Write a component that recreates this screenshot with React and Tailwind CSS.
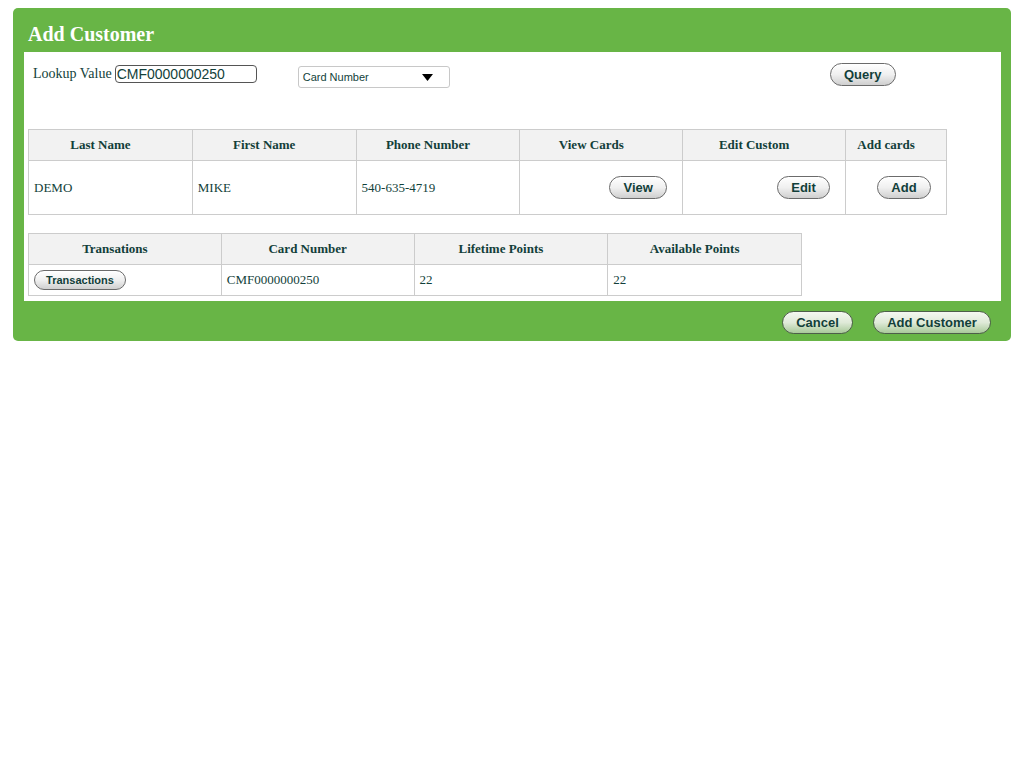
export default function App() {
    const serif = { fontFamily: '"Liberation Serif", "Times New Roman", serif' };
    const sans = { fontFamily: '"Liberation Sans", Arial, sans-serif' };

    const btn =
        'rounded-full border border-[#6b6b6b] bg-gradient-to-b from-[#ffffff] via-[#f0f0f0] to-[#cfcfcf] text-[13px] font-bold text-[#123f3a] leading-none shadow-[inset_0_1px_0_#fff]';
    const greenBtn =
        'rounded-full border border-[#4d5e4a] bg-gradient-to-b from-[#f4f8f1] via-[#dfead8] to-[#a9c99a] text-[13px] font-bold text-[#123f3a] leading-none';

    const th = 'border border-[#cccccc] bg-[#f2f2f2] text-[13px] font-bold text-[#123f3a] text-center py-0 pl-0 pr-[20px]';
    const td = 'border border-[#cccccc] text-[13px] text-[#123f3a] text-left px-[5px] py-0 font-normal';

    return (
        <div className="min-h-[768px] bg-white pt-[8px] pl-[13px]" style={sans}>
            <div className="w-[998px] rounded-[5px] bg-[#68b546]">
                {/* title */}
                <div className="h-[44px] pl-[15px] pt-[13px]">
                    <h1 className="text-[20px] font-bold leading-[26px] text-white" style={serif}>
                        Add Customer
                    </h1>
                </div>

                {/* body */}
                <div className="ml-[11px] mr-[10px] h-[249px] bg-white pl-[4px] pt-[11px]">
                    <div className="flex h-[26px] items-start">
                        <div className="mt-[2px] ml-[5px] flex items-center">
                            <span className="text-[14px] leading-[18px] text-[#123f3a]" style={serif}>
                                Lookup Value
                            </span>
                            <div className="ml-[3px] flex h-[18px] w-[142px] items-center rounded-[4px] border border-[#555] px-[1px] text-[14px] text-[#123f3a]">
                                CMF0000000250
                            </div>
                        </div>
                        <div className="mt-[3px] ml-[41px] flex h-[22px] w-[152px] items-center justify-between rounded-[3px] border border-[#c8c8c8] pl-[4px] pr-[16px] text-[11px] text-[#123f3a]">
                            <span>Card Number</span>
                            <svg width="11" height="7" viewBox="0 0 11 7">
                                <path d="M0 0 L11 0 L5.5 7 Z" fill="#000" />
                            </svg>
                        </div>
                        <button className={`${btn} ml-[380px] h-[23px] w-[66px]`}>Query</button>
                    </div>

                    {/* customer table */}
                    <table className="mt-[40px] w-[919px] border-collapse" style={serif}>
                        <thead>
                            <tr className="h-[31px]">
                                <th className={`${th} w-[164px]`}>Last Name</th>
                                <th className={`${th} w-[164px]`}>First Name</th>
                                <th className={`${th} w-[164px]`}>Phone Number</th>
                                <th className={`${th} w-[163px]`}>View Cards</th>
                                <th className={`${th} w-[163px]`}>Edit Custom</th>
                                <th className={`${th} w-[101px]`}>Add cards</th>
                            </tr>
                        </thead>
                        <tbody>
                            <tr className="h-[54px]">
                                <td className={td}>DEMO</td>
                                <td className={td}>MIKE</td>
                                <td className={td}>540-635-4719</td>
                                <td className={td}>
                                    <div className="flex justify-end pr-[10px]">
                                        <button className={`${btn} h-[23px] w-[58px]`} style={sans}>View</button>
                                    </div>
                                </td>
                                <td className={td}>
                                    <div className="flex justify-end pr-[10px]">
                                        <button className={`${btn} h-[23px] w-[53px]`} style={sans}>Edit</button>
                                    </div>
                                </td>
                                <td className={td}>
                                    <div className="flex justify-end pr-[10px]">
                                        <button className={`${btn} h-[23px] w-[54px]`} style={sans}>Add</button>
                                    </div>
                                </td>
                            </tr>
                        </tbody>
                    </table>

                    {/* card table */}
                    <table className="mt-[18px] w-[774px] border-collapse" style={serif}>
                        <thead>
                            <tr className="h-[31px]">
                                <th className={`${th} w-[193px]`}>Transations</th>
                                <th className={`${th} w-[193px]`}>Card Number</th>
                                <th className={`${th} w-[194px]`}>Lifetime Points</th>
                                <th className={`${th} w-[194px]`}>Available Points</th>
                            </tr>
                        </thead>
                        <tbody>
                            <tr className="h-[31px]">
                                <td className={td}>
                                    <button className={`${btn} h-[20px] w-[92px]`} style={{ ...sans, fontSize: 11 }}>
                                        Transactions
                                    </button>
                                </td>
                                <td className={td}>CMF0000000250</td>
                                <td className={td}>22</td>
                                <td className={td}>22</td>
                            </tr>
                        </tbody>
                    </table>
                </div>

                {/* footer */}
                <div className="flex h-[40px] items-start justify-end gap-[20px] pr-[20px] pt-[10px]">
                    <button className={`${greenBtn} h-[23px] w-[71px]`}>Cancel</button>
                    <button className={`${greenBtn} h-[23px] w-[118px]`}>Add Customer</button>
                </div>
            </div>
        </div>
    );
}
